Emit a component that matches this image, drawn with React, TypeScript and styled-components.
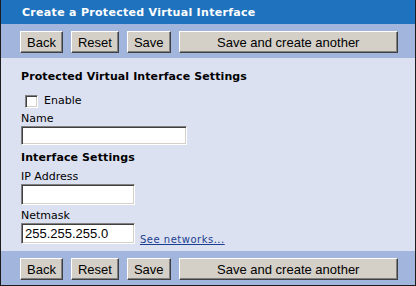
import React from "react";
import styled, { createGlobalStyle } from "styled-components";

const Global = createGlobalStyle`
  html, body { margin: 0; padding: 0; background: #ffffff; }
  * { box-sizing: border-box; }
`;

const Panel = styled.div`
  width: 416px;
  height: 286px;
  display: flex;
  flex-direction: column;
  border-left: 1px solid #1c1c1c;
  border-right: 1px solid #1c1c1c;
  border-bottom: 1px solid #1c1c1c;
  background: #dce1f2;
`;

const TitleBar = styled.div`
  height: 24px;
  flex: none;
  display: flex;
  align-items: center;
  padding-left: 21px;
  background: #1f73be;
  color: #ffffff;
  font-family: "DejaVu Sans", Verdana, sans-serif;
  font-weight: bold;
  font-size: 11px;
  letter-spacing: 0.3px;
`;

const Toolbar = styled.div`
  flex: none;
  height: 34px;
  display: flex;
  gap: 8px;
  padding: 7px 17px 5px 19px;
  background: #a2b5dc;
`;

const Button = styled.button<{ $grow?: boolean }>`
  height: 22px;
  padding: 0 6px;
  flex: ${(p) => (p.$grow ? "1" : "none")};
  background: #d4d0c8;
  color: #000000;
  font-family: "Liberation Sans", Arial, sans-serif;
  font-size: 13px;
  border-style: solid;
  border-width: 1px;
  border-color: #ffffff #404040 #404040 #ffffff;
  box-shadow: inset -1px -1px 0 #808080;
  cursor: default;
`;

const Content = styled.div`
  flex: 1;
  padding: 12px 20px 0 20px;
  font-family: "DejaVu Sans", Verdana, sans-serif;
  font-size: 11px;
  color: #000000;
`;

const Heading = styled.div<{ $top: number }>`
  margin-top: ${(p) => p.$top}px;
  font-weight: bold;
  line-height: 14px;
  letter-spacing: 0.1px;
`;

const CheckRow = styled.label`
  margin-top: 10px;
  display: flex;
  align-items: center;
  gap: 6px;
  padding-left: 4px;
  line-height: 14px;
`;

const Check = styled.span`
  width: 13px;
  height: 13px;
  background: #ffffff;
  border-style: solid;
  border-width: 1px;
  border-color: #808080 #ffffff #ffffff #808080;
  box-shadow: inset 1px 1px 0 #404040, inset -1px -1px 0 #d4d0c8;
`;

const Label = styled.div<{ $top?: number }>`
  margin-top: ${(p) => p.$top ?? 4}px;
  line-height: 14px;
`;

const InputRow = styled.div`
  display: flex;
  align-items: flex-end;
  gap: 5px;
`;

const Field = styled.div<{ $w: number; $h: number }>`
  width: ${(p) => p.$w}px;
  height: ${(p) => p.$h}px;
  background: #ffffff;
  border-style: solid;
  border-width: 1px;
  border-color: #808080 #ffffff #ffffff #808080;
  box-shadow: inset 1px 1px 0 #404040, inset -1px -1px 0 #d4d0c8;
  padding: 1px 3px 0 3px;
  font-family: "Liberation Sans", Arial, sans-serif;
  font-size: 13px;
  line-height: 17px;
`;

const Link = styled.a`
  font-family: "DejaVu Sans", Verdana, sans-serif;
  font-size: 10px;
  letter-spacing: 0.5px;
  color: #1a3f8f;
  text-decoration: underline;
  margin-bottom: -1px;
`;

const Bar = () => (
  <Toolbar>
    <Button>Back</Button>
    <Button>Reset</Button>
    <Button>Save</Button>
    <Button $grow>Save and create another</Button>
  </Toolbar>
);

export default function App() {
  return (
    <>
      <Global />
      <Panel>
        <TitleBar>Create a Protected Virtual Interface</TitleBar>
        <Bar />
        <Content>
          <Heading $top={0}>Protected Virtual Interface Settings</Heading>
          <CheckRow>
            <Check />
            Enable
          </CheckRow>
          <Label>Name</Label>
          <Field $w={166} $h={19} />
          <Heading $top={6}>Interface Settings</Heading>
          <Label $top={5}>IP Address</Label>
          <Field $w={114} $h={21} />
          <Label $top={4}>Netmask</Label>
          <InputRow>
            <Field $w={114} $h={21}>255.255.255.0</Field>
            <Link href="#">See networks...</Link>
          </InputRow>
        </Content>
        <Bar />
      </Panel>
    </>
  );
}
